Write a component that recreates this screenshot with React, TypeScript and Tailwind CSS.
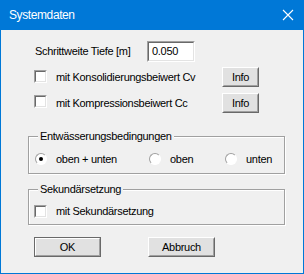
import React from 'react';

const font = { fontFamily: '"Liberation Sans", Arial, sans-serif' };

const CheckBox = () => (
  <span className="inline-block w-[13px] h-[13px] border border-[#a0a0a0] border-r-white border-b-white bg-white shrink-0">
    <span className="block w-full h-full border border-[#696969] border-r-[#e3e3e3] border-b-[#e3e3e3]" />
  </span>
);

const Radio = ({ checked }: { checked?: boolean }) => (
  <span className="flex items-center justify-center w-[12px] h-[12px] rounded-full border border-[#a0a0a0] border-r-white border-b-white bg-white shrink-0">
    {checked && <span className="block w-[4px] h-[4px] rounded-full bg-black" />}
  </span>
);

const Button = ({ label, className = '', isDefault = false }: { label: string; className?: string; isDefault?: boolean }) => (
  <button
    className={`h-[20px] bg-[#e1e1e1] border ${isDefault ? 'border-[#696969]' : 'border-white border-r-[#696969] border-b-[#696969]'} flex items-center justify-center leading-none ${className}`}
  >
    <span className={`w-full h-full flex items-center justify-center ${isDefault ? 'border border-white border-r-[#a0a0a0] border-b-[#a0a0a0]' : 'border border-transparent border-r-[#a0a0a0] border-b-[#a0a0a0]'}`}>
      {label}
    </span>
  </button>
);

const App = () => {
  return (
    <div
      className="w-[304px] h-[274px] bg-[#f0f0f0] border-x border-b border-[#0078d7] flex flex-col text-[11px] tracking-[-0.3px] text-black"
      style={font}
    >
      <div className="h-[30px] bg-[#0078d7] flex items-center justify-between pl-[8px] pr-[9px] shrink-0">
        <span className="text-white text-[12px] tracking-[-0.4px]">Systemdaten</span>
        <svg width="12" height="12" viewBox="0 0 12 12" className="mt-[-1px]">
          <path d="M1 1 L11 11 M11 1 L1 11" stroke="#fff" strokeWidth="1.1" />
        </svg>
      </div>

      <div className="flex flex-col">
        <div className="flex items-center h-[20px] mt-[11px]">
          <span className="ml-[34px] w-[112px]">Schrittweite Tiefe [m]</span>
          <div className="w-[48px] h-[21px] bg-white border border-[#a0a0a0] border-r-white border-b-white">
            <div className="w-full h-full border border-[#696969] border-r-[#e3e3e3] border-b-[#e3e3e3] pl-[3px] flex items-center">
              0.050
            </div>
          </div>
        </div>

        <div className="flex items-center h-[20px] mt-[6px]">
          <div className="ml-[33px] mt-[3px]"><CheckBox /></div>
          <span className="ml-[9px] w-[166px]">mit Konsolidierungsbeiwert Cv</span>
          <Button label="Info" className="w-[37px]" />
        </div>

        <div className="flex items-center h-[20px] mt-[6px]">
          <div className="ml-[33px] mt-[2px]"><CheckBox /></div>
          <span className="ml-[9px] w-[166px]">mit Kompressionsbeiwert Cc</span>
          <Button label="Info" className="w-[37px]" />
        </div>

        <fieldset className="ml-[27px] w-[257px] mt-[16px] h-[45px] border border-[#a0a0a0] shadow-[inset_1px_1px_0_#fff,1px_1px_0_#fff] pl-[6px]">
          <legend className="px-[2px] ml-[3px] leading-[14px] bg-[#f0f0f0]">Entwässerungsbedingungen</legend>
          <div className="flex items-center mt-[8px]">
            <Radio checked />
            <span className="ml-[9px] w-[93px]">oben + unten</span>
            <Radio />
            <span className="ml-[9px] w-[55px]">oben</span>
            <Radio />
            <span className="ml-[9px]">unten</span>
          </div>
        </fieldset>

        <fieldset className="ml-[27px] w-[257px] mt-[8px] h-[43px] border border-[#a0a0a0] shadow-[inset_1px_1px_0_#fff,1px_1px_0_#fff] pl-[5px]">
          <legend className="px-[2px] ml-[4px] leading-[14px] bg-[#f0f0f0]">Sekundärsetzung</legend>
          <div className="flex items-center mt-[7px]">
            <CheckBox />
            <span className="ml-[9px]">mit Sekundärsetzung</span>
          </div>
        </fieldset>

        <div className="flex mt-[12px] ml-[33px] gap-[47px]">
          <Button label="OK" className="w-[67px]" isDefault />
          <Button label="Abbruch" className="w-[67px]" />
        </div>
      </div>
    </div>
  );
};

export default App;
